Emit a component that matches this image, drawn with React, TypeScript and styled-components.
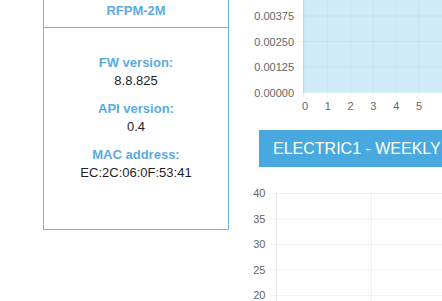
import React from "react";
import styled, { createGlobalStyle } from "styled-components";

const Global = createGlobalStyle`
  html, body { margin: 0; padding: 0; background: #fff; overflow: hidden; }
  body { font-family: "Liberation Sans", Arial, sans-serif; }
`;

const Page = styled.div`
  display: flex;
  align-items: flex-start;
  padding-left: 43px;
  gap: 21px;
  width: 442px;
  height: 301px;
  box-sizing: border-box;
  overflow: hidden;
`;

const Panel = styled.section`
  width: 186px;
  box-sizing: border-box;
  border: 1px solid #6cb6ea;
  margin-top: -6px;
  flex-shrink: 0;
`;

const PanelHeader = styled.div`
  height: 32px;
  line-height: 32px;
  text-align: center;
  font-weight: bold;
  font-size: 13px;
  color: #5aabe4;
  border-bottom: 1px solid #6cb6ea;
`;

const PanelBody = styled.div`
  height: 201px;
  box-sizing: border-box;
  padding-top: 26px;
  display: flex;
  flex-direction: column;
  align-items: center;
  gap: 10px;
`;

const Info = styled.div`
  display: flex;
  flex-direction: column;
  align-items: center;
`;

const Label = styled.div`
  font-size: 13px;
  font-weight: bold;
  line-height: 18px;
  color: #5aabe4;
`;

const Value = styled.div`
  font-size: 13px;
  line-height: 18px;
  color: #1e1e1e;
`;

const RightCol = styled.div`
  flex: 1;
  display: flex;
  flex-direction: column;
  min-width: 0;
`;

const Banner = styled.div`
  margin: 12px 0 13px 9px;
  height: 37px;
  background: #48a9e1;
  color: #fff;
  font-size: 16px;
  line-height: 37px;
  padding-left: 14px;
  white-space: nowrap;
  overflow: hidden;
`;

const ChartSvg = styled.svg`
  display: block;
  font-family: "Liberation Sans", Arial, sans-serif;
`;

const TopChart = () => {
  const ys = [
    { v: "0.00375", y: 16 },
    { v: "0.00250", y: 41.5 },
    { v: "0.00125", y: 67 },
    { v: "0.00000", y: 92.5 },
  ];
  const xs = [0, 1, 2, 3, 4, 5];
  const ox = 53; // axis x in svg coords (page 303)
  return (
    <ChartSvg width={192} height={118} viewBox="0 0 192 118">
      <rect x={ox} y={0} width={150} height={92.5} fill="#cfebfa" />
      {ys.map((t) => (
        <g key={t.v}>
          <line x1={ox - 6} x2={192} y1={t.y} y2={t.y} stroke="rgba(0,0,0,0.04)" strokeWidth={1} />
          <text x={44} y={t.y + 4} fontSize={11} fill="#666" textAnchor="end">
            {t.v}
          </text>
        </g>
      ))}
      {xs.map((i) => {
        const x = ox + 2 + i * 22.8;
        return (
          <g key={i}>
            <line x1={x} x2={x} y1={0} y2={97} stroke="rgba(0,0,0,0.035)" strokeWidth={1} />
            <text x={x} y={110} fontSize={11} fill="#666" textAnchor="middle">
              {i}
            </text>
          </g>
        );
      })}
      <line x1={ox + 0.5} x2={ox + 0.5} y1={0} y2={97} stroke="rgba(0,0,0,0.08)" />
    </ChartSvg>
  );
};

const BottomChart = () => {
  const ys = [
    { v: "40", y: 13 },
    { v: "35", y: 38.5 },
    { v: "30", y: 64 },
    { v: "25", y: 89.5 },
    { v: "20", y: 115 },
  ];
  const ox = 26; // page 276
  return (
    <ChartSvg width={192} height={121} viewBox="0 0 192 121">
      {ys.map((t) => (
        <g key={t.v}>
          <line x1={ox - 6} x2={192} y1={t.y + 0.5} y2={t.y + 0.5} stroke="rgba(0,0,0,0.05)" />
          <text x={15.5} y={t.y + 4} fontSize={11} fill="#666" textAnchor="end">
            {t.v}
          </text>
        </g>
      ))}
      <line x1={ox + 0.5} x2={ox + 0.5} y1={13} y2={121} stroke="rgba(0,0,0,0.08)" />
      <line x1={121.5} x2={121.5} y1={13} y2={121} stroke="rgba(0,0,0,0.05)" />
    </ChartSvg>
  );
};

const items = [
  { label: "FW version:", value: "8.8.825" },
  { label: "API version:", value: "0.4" },
  { label: "MAC address:", value: "EC:2C:06:0F:53:41" },
];

export default function App() {
  return (
    <>
      <Global />
      <Page>
        <Panel>
          <PanelHeader>RFPM-2M</PanelHeader>
          <PanelBody>
            {items.map((it) => (
              <Info key={it.label}>
                <Label>{it.label}</Label>
                <Value>{it.value}</Value>
              </Info>
            ))}
          </PanelBody>
        </Panel>
        <RightCol>
          <TopChart />
          <Banner>ELECTRIC1 - WEEKLY</Banner>
          <BottomChart />
        </RightCol>
      </Page>
    </>
  );
}
